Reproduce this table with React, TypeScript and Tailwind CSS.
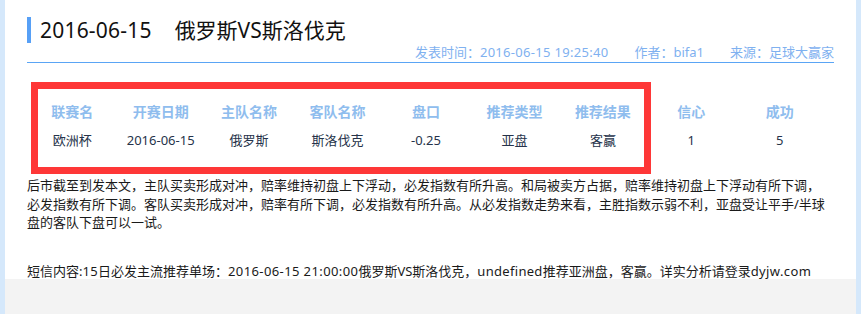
import React from 'react';

const font = { fontFamily: '"Noto Sans", "Noto Sans CJK SC", sans-serif' };

const columns = ['联赛名', '开赛日期', '主队名称', '客队名称', '盘口', '推荐类型', '推荐结果', '信心', '成功'];
const values = ['欧洲杯', '2016-06-15', '俄罗斯', '斯洛伐克', '-0.25', '亚盘', '客赢', '1', '5'];

export default function App() {
    return (
        <div className="flex h-[314px] w-[861px] bg-[#d5e8fb] px-[5px] overflow-hidden" style={font}>
            <div className="flex flex-1 flex-col bg-[#f3f3f3]">
                <div className="relative h-[279px] bg-white pl-[22px] pr-[22px]">
                    {/* 标题 */}
                    <div className="flex items-center pt-[17px]">
                        <div className="h-[26px] w-[4px] bg-[#57a0f6]" />
                        <h1 className="ml-[9px] text-[21px] leading-[26px] text-[#111]">
                            <span className="tracking-[0.2px]">2016-06-15</span>
                            <span className="ml-[23px]">俄罗斯VS斯洛伐克</span>
                        </h1>
                    </div>
                    <div className="flex justify-end gap-[26px] border-b border-[#5aa5f5] pt-[1px] pb-[1px] text-[13px] leading-[17px] text-[#7fb1f0]">
                        <span>发表时间：<span className="tracking-[0.3px]">2016-06-15 19:25:40</span></span>
                        <span>作者：bifa1</span>
                        <span>来源：足球大赢家</span>
                    </div>

                    {/* 推荐表 */}
                    <div className="mt-[35px] grid w-[797px] grid-cols-9 pl-[1px] text-center">
                        {columns.map(c => (
                            <div key={c} className="h-[28px] text-[14px] font-bold leading-[28px] text-[#8fbdee]">{c}</div>
                        ))}
                        {values.map((v, i) => (
                            <div key={i} className="h-[28px] text-[13px] leading-[28px] text-[#26334a]">{v}</div>
                        ))}
                    </div>

                    <p className="mt-[22px] w-[804px] text-[13px] leading-[18.5px] text-[#1a1a1a]">
                        后市截至到发本文，主队买卖形成对冲，赔率维持初盘上下浮动，必发指数有所升高。和局被卖方占据，赔率维持初盘上下浮动有所下调，必发指数有所下调。客队买卖形成对冲，赔率有所下调，必发指数有所升高。从必发指数走势来看，主胜指数示弱不利，亚盘受让平手/半球盘的客队下盘可以一试。
                    </p>
                    <p className="mt-[30px] w-[804px] text-[13px] leading-[18px] text-[#1a1a1a]">
                        短信内容:<span className="tracking-[0.3px]">15</span>日必发主流推荐单场：<span className="tracking-[0.4px]">2016-06-15 21:00:00</span>俄罗斯VS斯洛伐克，<span className="tracking-[0.3px]">undefined</span>推荐亚洲盘，客赢。详实分析请登录<span className="tracking-[0.4px]">dyjw.com</span>
                    </p>

                    {/* 红色标注框 */}
                    <div className="pointer-events-none absolute left-[26px] top-[82px] h-[92px] w-[620px] border-[7px] border-[#fe3737]" />
                </div>
            </div>
        </div>
    );
}
